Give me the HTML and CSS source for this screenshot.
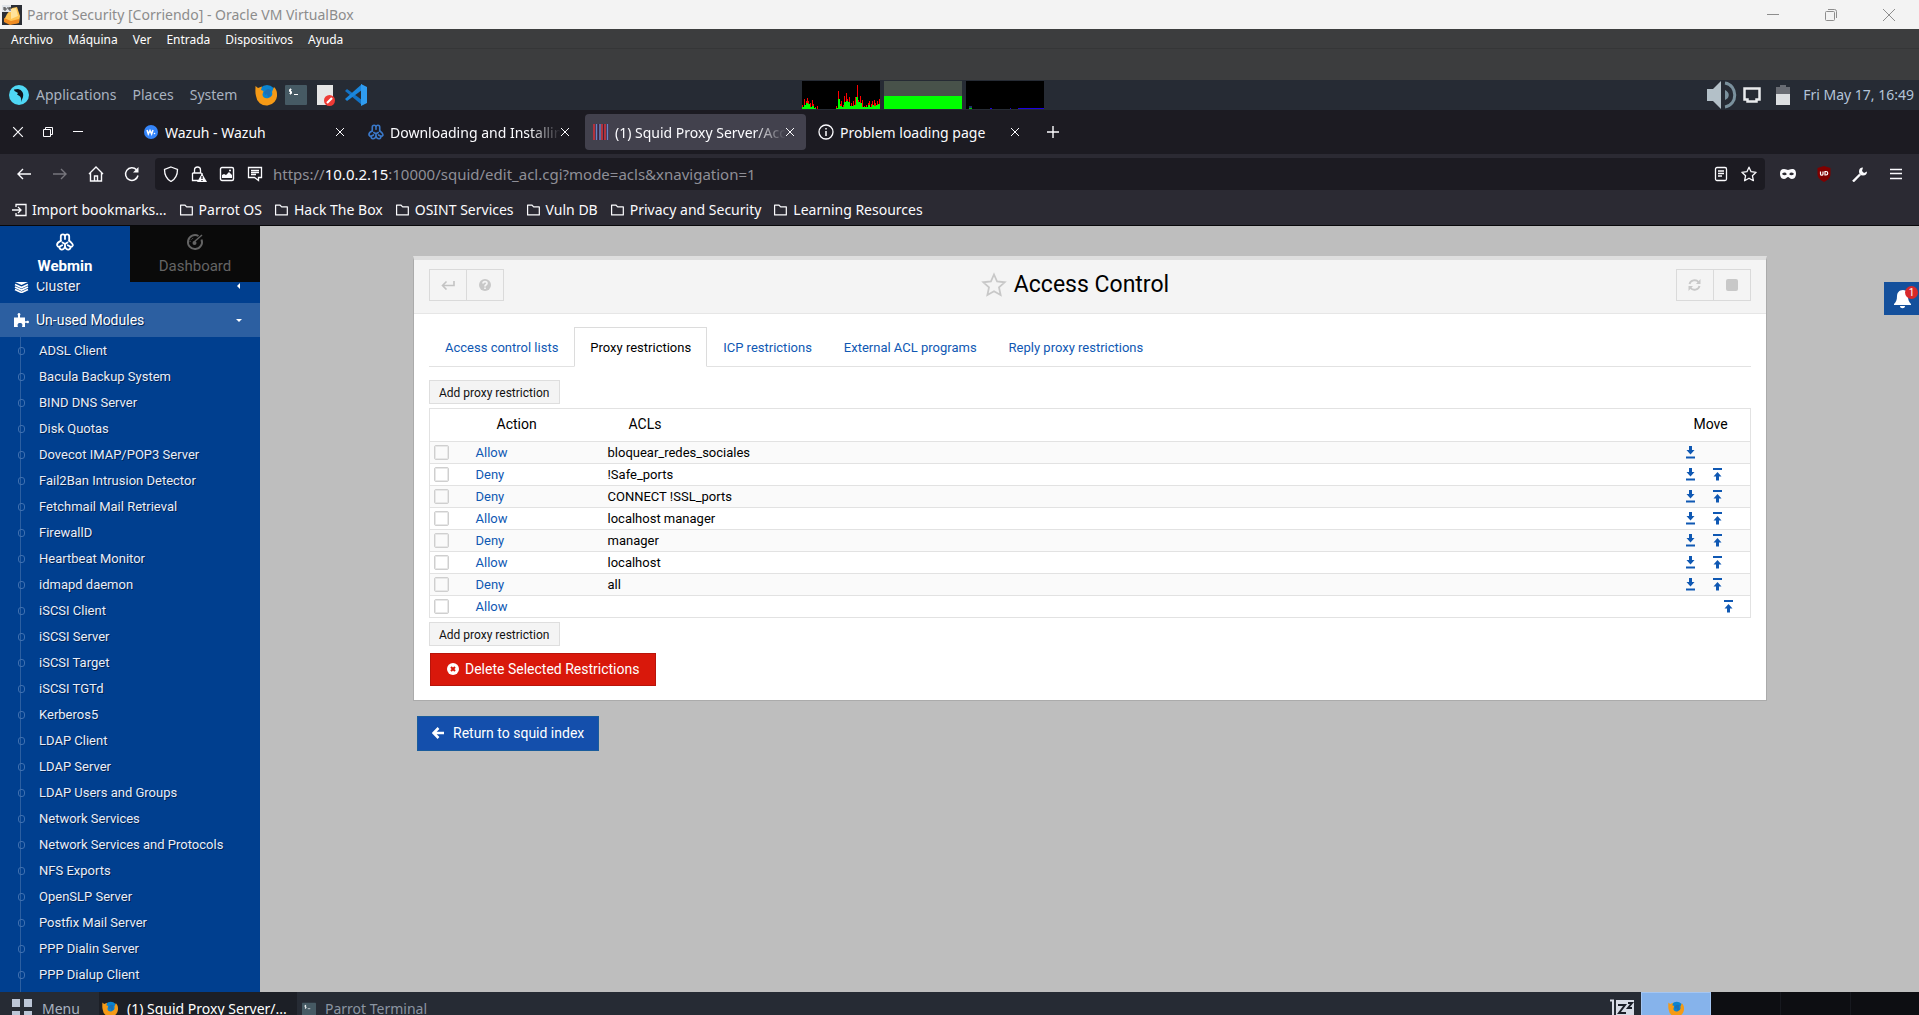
FILE: index.html
```html
<!DOCTYPE html>
<html lang="es">
<head>
<meta charset="utf-8">
<title>Parrot Security [Corriendo] - Oracle VM VirtualBox</title>
<link rel="stylesheet" href="styles.css">
</head>
<body>
<svg class="defs" aria-hidden="true">
  <symbol id="firefox" viewBox="0 0 22 22">
    <circle cx="12" cy="10" r="9" fill="#0a84d0"/>
    <path d="M0.500 2l2.500 2 4-1.500-1 3.500 2.500 1-1 3.500c0 3 3 4.500 6 3.500 3-1 4.500-3 3.500-6l2-5c2 2 3 4 3 7a10.500 10.500 0 0 1-21 2C0 9 .5 5 .5 2z" fill="#f59a16"/>
    <path d="M13 5l3 1-1 3 1 3-3 1-1-3-2 1-1-3 2-2z" fill="#1b6fb5"/>
  </symbol>
  <symbol id="terminal" viewBox="0 0 22 20">
    <rect width="22" height="20" rx="1" fill="#465a64"/>
    <path d="M6.500 4.500h-2v2h2v2h-2M5.500 3.500v6M9 9.500h4" fill="none" stroke="#fff"/>
  </symbol>
  <symbol id="webmin" viewBox="0 0 18 18">
    <g fill="none" stroke="currentColor" stroke-width="1.800" stroke-linejoin="round" stroke-linecap="round">
      <path d="M4.800 7.800V3.600A2.100 2.200 0 0 1 9 3.600V6M9 3.600A2.100 2.200 0 0 1 13.200 3.600V7.800"/>
      <path d="M4.800 7.800C1.800 9 .8 11 1.200 12.500Q1.800 14 3.400 13.800Q3.400 16.300 5.400 16.600Q8 16.800 9 13.800Q10 16.800 12.600 16.600Q14.600 16.300 14.600 13.800Q16.200 14 16.800 12.500Q17.200 11 13.200 7.800"/>
      <path d="M3.400 13.800L6.200 12.300M14.600 13.800L11.800 12.300M9 13.500V11M9 11L6.500 9.500M9 11L11.500 9.500"/>
    </g>
  </symbol>
  <symbol id="x" viewBox="0 0 10 10"><path d="M1 1l8 8M9 1L1 9" fill="none" stroke="currentColor"/></symbol>
  <symbol id="folder" viewBox="0 0 16 14"><path d="M1.700 1.700h4.500l2 2h6v8.600H1.700z" fill="none" stroke="currentColor" stroke-width="1.300" stroke-linejoin="round"/></symbol>
  <symbol id="down" viewBox="0 0 9 14"><path d="M3 1h3v4h2.500L4.500 9.500.5 5H3zM0 11.500h9v2H0z" fill="currentColor"/></symbol>
  <symbol id="up" viewBox="0 0 9 14"><path d="M3 13.500h3v-4h2.500L4.500 5 .5 9.500H3zM0 1h9v2H0z" fill="currentColor"/></symbol>
</svg>

<header class="titlebar">
  <svg width="20" height="20" viewBox="0 0 20 20"><rect width="20" height="20" fill="#2b2e35"/><path d="M5 9l5-6 5-1 3 9-1 7-9 1-6-4z" fill="#ffc553"/><path d="M2 13l7 3 8-2v4l-9 2-6-3z" fill="#f08c22"/><path d="M9 4l5-1 2 8-7 3z" fill="#ffe39a"/><rect width="9" height="7" fill="#dfe3e8"/><path d="M2 2v3h2V3H2M6 2v2h2V2v4" stroke="#444" fill="none"/></svg>
  <span class="titlebar-text">Parrot Security [Corriendo] - Oracle VM VirtualBox</span>
  <button aria-label="Minimizar"><svg width="12" height="12"><path d="M0 5.500h12" stroke="#8d8d8d"/></svg></button>
  <button aria-label="Restaurar"><svg width="12" height="12" fill="none" stroke="#8d8d8d"><rect x=".5" y="2.500" width="9" height="9" rx="1"/><path d="M3 .5h6.500a2 2 0 0 1 2 2V9"/></svg></button>
  <button aria-label="Cerrar"><svg width="12" height="12"><path d="M0 0l12 12M12 0L0 12" stroke="#8d8d8d"/></svg></button>
</header>
<nav class="menubar"><span>Archivo</span><span>Máquina</span><span>Ver</span><span>Entrada</span><span>Dispositivos</span><span>Ayuda</span></nav>

<div class="panel-top">
  <svg class="parrot" width="20" height="20" viewBox="0 0 20 20"><circle cx="10" cy="10" r="10" fill="#4fd8f5"/><path d="M5 4.500l4-.5c4 1 6 4 5 8l-2 5c.5-3 0-5-1.500-6L8 9.500 9 8 5.500 6z" fill="#10151c"/></svg>
  <span>Applications</span><span>Places</span><span>System</span>
  <div class="launchers">
    <svg width="22" height="22"><use href="#firefox"/></svg>
    <svg width="22" height="20"><use href="#terminal"/></svg>
    <svg class="doc" width="18" height="22" viewBox="0 0 18 22"><path d="M0 1h16v20H0z" fill="#e6e6e6"/><circle cx="12.500" cy="16.500" r="5.500" fill="#ee3a35"/><path d="M10 19l5-5" stroke="#fff" stroke-width="2.200"/></svg>
    <svg width="22" height="22" viewBox="0 0 22 22"><path d="M0 7l2-2 15 11v5z" fill="#1272c4"/><path d="M0 15l2 2L17 6V0z" fill="#1a86dc"/><path d="M16 0l6 3v16l-6 3z" fill="#2f9cf0"/></svg>
  </div>
  <div class="graphs">
    <svg width="78" height="28" viewBox="0 0 78 28"><rect width="78" height="28" fill="#000"/>
      <path stroke="red" d="M.5 28v-4M2.500 28v-10M4.500 28v-8M5.500 28v-11M6.500 28v-8M8.500 28v-6M10.500 28v-9M11.500 28v-5M13.500 28v-2M15.500 28v-3M34.500 28v-3M36.500 28v-18M38.500 28v-5M39.500 28v-8M41.500 28v-4M42.500 28v-13M44.500 28v-16M45.500 28v-10M47.500 28v-12M49.500 28v-6M51.500 28v-8M53.500 28v-12M55.500 28v-24M56.500 28v-9M58.500 28v-13M60.500 28v-9M62.500 28v-3M64.500 28v-4M66.500 28v-6M67.500 28v-8M69.500 28v-5M70.500 28v-8M72.500 28v-9M73.500 28v-6M75.500 28v-8M77.500 28v-10"/>
      <path stroke="lime" stroke-width="2" d="M1 28v-2M3 28v-4M5 28v-6M7 28v-5M9 28v-2M11 28v-3M13 28v-1M35 28v-1M37 28v-10M39 28v-3M41 28v-2M43 28v-7M45 28v-8M47 28v-7M49 28v-3M51 28v-3M53 28v-4M55 28v-12M57 28v-7M59 28v-6M61 28v-2M63 28v-2M65 28v-2M67 28v-4M69 28v-2M71 28v-4M73 28v-3M75 28v-4M77 28v-5"/></svg>
    <svg width="78" height="28"><rect width="78" height="28" fill="#48524a"/><rect y="15" width="78" height="13" fill="lime"/></svg>
    <svg width="78" height="28"><rect width="78" height="28" fill="#000"/><path d="M24 27.500h2M44 27.500h1M52 27.500h26" stroke="#1c00e0"/><path d="M3 26h3" stroke="#36c" stroke-width="1"/><path d="M3 27.500h3" stroke="#0c0"/></svg>
  </div>
  <div class="tray">
    <svg width="30" height="28" viewBox="0 0 30 28"><path d="M0 8h6l8-8v28l-8-8H0z" fill="#b3c0c8"/><path d="M18 9c5 2 5 8 0 10z" fill="#7a919d"/><path d="M18 2c13 2 13 22 0 24" fill="none" stroke="#7a919d" stroke-width="3"/></svg>
    <svg width="18" height="16" viewBox="0 0 18 16"><path d="M1.500 1.500h15v11h-3v2h-9v-2h-3z" fill="none" stroke="#e9ebed" stroke-width="2.500"/></svg>
    <svg class="battery" width="14" height="20"><path d="M0 2h4V0h6v2h4v8H0z" fill="#696c73"/><path d="M0 9h14v11H0z" fill="#dcdfe1"/></svg>
    <span>Fri May 17, 16:49</span>
  </div>
</div>

<div class="tabstrip">
  <div class="window-buttons">
    <button aria-label="Close"><svg width="12" height="12"><use href="#x"/></svg></button>
    <button aria-label="Restore"><svg width="10" height="10" fill="none" stroke="#fbfbfe"><path d="M.5 2.500h7v7h-7zM2.500 2V.5h7v7H8"/></svg></button>
    <button aria-label="Minimize"><svg width="10" height="10"><path d="M0 4.500h10" stroke="#fbfbfe"/></svg></button>
  </div>
  <div class="tab"><svg width="16" height="16" viewBox="0 0 16 16"><circle cx="8" cy="8" r="7" fill="#3585f9"/><path d="M4 6l1.300 4L7 6.500 8.600 10 10 6" fill="none" stroke="#fff" stroke-width="1.500"/><circle cx="11.500" cy="9.500" r=".8" fill="#fff"/></svg><span class="tab-label">Wazuh - Wazuh</span><button aria-label="Close tab"><svg width="10" height="10"><use href="#x"/></svg></button></div>
  <div class="tab"><svg class="blue" width="16" height="16"><use href="#webmin"/></svg><span class="tab-label fade">Downloading and Installing</span><button aria-label="Close tab"><svg width="10" height="10"><use href="#x"/></svg></button></div>
  <div class="tab active"><svg width="16" height="16" viewBox="0 0 16 16"><rect width="16" height="16" fill="#3a2540"/><path d="M1 0v16M9 0v16M12 0v16" stroke="#d8383c" stroke-width="1.500"/><path d="M3.500 0v16M7 0v16M14.500 0v16" stroke="#6a85c0" stroke-width="1.500"/></svg><span class="tab-label fade">(1) Squid Proxy Server/Acc</span><button aria-label="Close tab"><svg width="10" height="10"><use href="#x"/></svg></button></div>
  <div class="tab"><svg width="16" height="16" fill="none" stroke="#fbfbfe"><circle cx="8" cy="8" r="7" stroke-width="1.300"/><path d="M8 7v5M8 4v1.500" stroke-width="1.500"/></svg><span class="tab-label">Problem loading page</span><button aria-label="Close tab"><svg width="10" height="10"><use href="#x"/></svg></button></div>
  <button class="newtab" aria-label="New tab"><svg width="12" height="12"><path d="M6 0v12M0 6h12" stroke="#fbfbfe" stroke-width="1.400"/></svg></button>
</div>

<div class="toolbar">
  <button aria-label="Back"><svg width="16" height="16" fill="none" stroke="#fbfbfe" stroke-width="1.400"><path d="M15 8H2M7 3L2 8l5 5"/></svg></button>
  <button aria-label="Forward"><svg width="16" height="16" fill="none" stroke="#77767d" stroke-width="1.400"><path d="M1 8h13M9 3l5 5-5 5"/></svg></button>
  <button aria-label="Home"><svg width="16" height="16" fill="none" stroke="#fbfbfe" stroke-width="1.400"><path d="M1 8l7-7 7 7M2.500 7v8h11V7M6.500 15v-5h3v5"/></svg></button>
  <button aria-label="Reload"><svg width="16" height="16" fill="none" stroke="#fbfbfe" stroke-width="1.500"><path d="M14 9.500A6.300 6.300 0 1 1 12.500 3.800"/><path d="M14.500 1v5.500H9z" fill="#fbfbfe" stroke="none"/></svg></button>
  <div class="urlbar">
    <svg width="16" height="16" fill="none" stroke="#fbfbfe" stroke-width="1.300"><path d="M8 1l6.500 2.500c0 6-2 9.500-6.500 12-4.500-2.500-6.500-6-6.500-12z"/></svg>
    <svg width="16" height="16" fill="none" stroke="#fbfbfe" stroke-width="1.300"><path d="M3.500 7V4a3 3 0 0 1 6 0v3M1.500 7h9M1.500 7v7.500H7M11 7v2"/><path d="M11 7.500l5 8.500H6z" fill="#fbfbfe" stroke="none"/><path d="M11 10v3M11 14v1" stroke="#1c1b22"/></svg>
    <svg width="16" height="16"><rect x="1.500" y="1.500" width="13" height="13" rx="1.500" fill="none" stroke="#fbfbfe" stroke-width="1.400"/><path d="M3 12V9l2-1 2 1 3-3 3 3v3z" fill="#fbfbfe"/><circle cx="11" cy="4.500" r="1" fill="#fbfbfe"/></svg>
    <svg width="16" height="16" fill="none" stroke="#fbfbfe" stroke-width="1.300"><path d="M1.500 1.500h13v10h-3v3l-4-3h-6zM4 4.500h8M4 6.500h8M4 8.500h5"/></svg>
    <p class="url">https://<b>10.0.2.15</b>:10000/squid/edit_acl.cgi?mode=acls&amp;xnavigation=1</p>
    <svg width="16" height="16" fill="none" stroke="#fbfbfe" stroke-width="1.300"><rect x="2.500" y="1.500" width="11" height="13" rx="1.500"/><path d="M5 5h6M5 7.500h6M5 10h4"/></svg>
    <svg width="16" height="16" fill="none" stroke="#fbfbfe" stroke-width="1.300" stroke-linejoin="round"><path d="M8 1.200l2.100 4.500 5 .6-3.700 3.400 1 5L8 12.200l-4.400 2.500 1-5L.9 6.300l5-.6z"/></svg>
  </div>
  <button aria-label="Private mask"><svg width="16" height="10" viewBox="0 0 16 10"><path d="M4 0c2 0 3 1 4 1s2-1 4-1c3 0 4 2 4 4.500S15 10 12 10c-2 0-3-2-4-2s-2 2-4 2c-3 0-4-3-4-5.500S1 0 4 0zm.5 3.500C3 3.500 2.200 4.300 2.200 5.200c1.300 1.300 3.700 1.300 4.600 0C6.400 4 5.500 3.500 4.500 3.500zm7 0c-1 0-1.900.5-2.300 1.700.9 1.300 3.300 1.300 4.600 0 0-.9-.8-1.700-2.300-1.700z" fill="#fbfbfe" fill-rule="evenodd"/></svg></button>
  <button aria-label="uBlock"><svg width="16" height="16"><path d="M8 0l6.500 2v6c0 4-3 6-6.500 8-3.500-2-6.500-4-6.500-8V2z" fill="#800000"/><path d="M4.500 5.500V8a1.200 1.200 0 0 0 2.500 0V5.500M9 5.500h1a1.500 1.500 0 0 1 0 3.500H9z" fill="none" stroke="#fff" stroke-width="1.200"/></svg></button>
  <button aria-label="Tools"><svg width="16" height="16"><path d="M1 15.500L8 8.500" stroke="#fbfbfe" stroke-width="2.400"/><path d="M11 1.500a4 4 0 1 0 4 4l-3 1.500-2-2z" fill="#fbfbfe"/></svg></button>
  <button aria-label="Menu"><svg width="12" height="12"><path d="M0 1.500h12M0 5.500h12M0 10.500h12" stroke="#fbfbfe" stroke-width="1.300"/></svg></button>
</div>
<nav class="bookmarks">
  <a href="#"><svg width="15" height="14" fill="none" stroke="currentColor" stroke-width="1.300"><path d="M0 7h9M6 4l3 3-3 3M4 4V1.500h10v11H4V10"/></svg>Import bookmarks...</a>
  <a href="#"><svg width="15" height="14"><use href="#folder"/></svg>Parrot OS</a>
  <a href="#"><svg width="15" height="14"><use href="#folder"/></svg>Hack The Box</a>
  <a href="#"><svg width="15" height="14"><use href="#folder"/></svg>OSINT Services</a>
  <a href="#"><svg width="15" height="14"><use href="#folder"/></svg>Vuln DB</a>
  <a href="#"><svg width="15" height="14"><use href="#folder"/></svg>Privacy and Security</a>
  <a href="#"><svg width="15" height="14"><use href="#folder"/></svg>Learning Resources</a>
</nav>

<div class="page">
  <aside class="sidebar">
    <div class="modes">
      <button class="mode"><svg width="18" height="18"><use href="#webmin"/></svg>Webmin</button>
      <button class="mode dash"><svg width="18" height="18" viewBox="0 0 18 18"><path d="M12.500 3A7 7 0 1 0 15.500 6.500" fill="none" stroke="currentColor" stroke-width="2"/><path d="M16 2L8 9" stroke="currentColor" stroke-width="1.500"/><circle cx="8.500" cy="10" r="2" fill="currentColor"/><path d="M4 9a5 5 0 0 1 4-4" fill="none" stroke="currentColor" stroke-dasharray="1 1"/></svg>Dashboard</button>
    </div>
    <div class="tree">
      <a class="group cut" href="#"><svg width="15" height="14" viewBox="0 0 15 14"><path d="M1 3l6.500-3L14 3 7.500 6z" fill="#fff"/><path d="M1 5.500l6.500 3 6.500-3M1 8l6.500 3L14 8M1 10.500l6.500 3 6.500-3" fill="none" stroke="#fff" stroke-width="1.700"/></svg>Cluster<i class="caret left"></i></a>
      <a class="group open" href="#"><svg width="15" height="14" viewBox="0 0 15 14"><path d="M0 4.500h4V2.500C3 1.500 3.800 0 5 0s2 1.500 1 2.500v2h5v3.700h1.500c1-1 2.500-.3 2.500.8s-1.500 1.800-2.500.8H11V14H8c.8-2 .5-4-2-4s-2.800 2-2 4H0z" fill="#fff"/></svg>Un-used Modules<i class="caret"></i></a>
      <ul class="modules">
        <li><a href="#">ADSL Client</a></li><li><a href="#">Bacula Backup System</a></li><li><a href="#">BIND DNS Server</a></li><li><a href="#">Disk Quotas</a></li><li><a href="#">Dovecot IMAP/POP3 Server</a></li><li><a href="#">Fail2Ban Intrusion Detector</a></li><li><a href="#">Fetchmail Mail Retrieval</a></li><li><a href="#">FirewallD</a></li><li><a href="#">Heartbeat Monitor</a></li><li><a href="#">idmapd daemon</a></li><li><a href="#">iSCSI Client</a></li><li><a href="#">iSCSI Server</a></li><li><a href="#">iSCSI Target</a></li><li><a href="#">iSCSI TGTd</a></li><li><a href="#">Kerberos5</a></li><li><a href="#">LDAP Client</a></li><li><a href="#">LDAP Server</a></li><li><a href="#">LDAP Users and Groups</a></li><li><a href="#">Network Services</a></li><li><a href="#">Network Services and Protocols</a></li><li><a href="#">NFS Exports</a></li><li><a href="#">OpenSLP Server</a></li><li><a href="#">Postfix Mail Server</a></li><li><a href="#">PPP Dialin Server</a></li><li><a href="#">PPP Dialup Client</a></li>
      </ul>
    </div>
  </aside>

  <main class="content">
    <section class="card">
      <div class="card-head">
        <div class="btn-group">
          <button aria-label="Back"><svg width="14" height="10" fill="none" stroke="#c3c3c3" stroke-width="1.600"><path d="M13 1v4.500H1.500M5.500 1.500l-4 4 4 4"/></svg></button>
          <button aria-label="Help"><svg width="12" height="12"><circle cx="6" cy="6" r="6" fill="#c8c8c8"/><path d="M4 4.500c0-2.500 4-2.500 4-.2C8 6 6 5.500 6 7.500M6 8.500v1.600" fill="none" stroke="#f4f4f4" stroke-width="1.700"/></svg></button>
        </div>
        <h1><svg width="26" height="26" viewBox="0 0 26 26"><path d="M13 2.500l3.100 7 7.600.8-5.700 5.100 1.600 7.600L13 19.200 6.400 23 8 15.400 2.300 10.300l7.600-.8z" fill="none" stroke="#c8c8c8" stroke-width="1.800"/></svg>Access Control</h1>
        <div class="btn-group">
          <button aria-label="Refresh"><svg width="13" height="12" viewBox="0 0 13 12"><path d="M1.500 5C2.500 1 8 0 10.500 3M11.500 7C10.500 11 5 12 2.500 9" fill="none" stroke="#c8c8c8" stroke-width="1.900"/><path d="M12.500 0v5H8zM.5 12V7H5z" fill="#c8c8c8"/></svg></button>
          <button aria-label="Stop"><svg width="12" height="12"><rect width="12" height="12" rx="2" fill="#c8c8c8"/></svg></button>
        </div>
      </div>
      <div class="card-body">
        <nav class="acl-tabs"><a href="#">Access control lists</a><a class="current" href="#">Proxy restrictions</a><a href="#">ICP restrictions</a><a href="#">External ACL programs</a><a href="#">Reply proxy restrictions</a></nav>
        <button class="add">Add proxy restriction</button>
        <table class="acl">
          <thead><tr><th class="c-check"></th><th class="c-action">Action</th><th>ACLs</th><th class="c-move">Move</th></tr></thead>
          <tbody>
            <tr><td><input type="checkbox" aria-label="bloquear_redes_sociales"></td><td><a href="#">Allow</a></td><td>bloquear_redes_sociales</td><td><div class="moves"><a href="#" aria-label="Move down"><svg><use href="#down"/></svg></a></div></td></tr>
            <tr><td><input type="checkbox" aria-label="!Safe_ports"></td><td><a href="#">Deny</a></td><td>!Safe_ports</td><td><div class="moves"><a href="#" aria-label="Move down"><svg><use href="#down"/></svg></a><a href="#" aria-label="Move up"><svg><use href="#up"/></svg></a></div></td></tr>
            <tr><td><input type="checkbox" aria-label="CONNECT !SSL_ports"></td><td><a href="#">Deny</a></td><td>CONNECT !SSL_ports</td><td><div class="moves"><a href="#" aria-label="Move down"><svg><use href="#down"/></svg></a><a href="#" aria-label="Move up"><svg><use href="#up"/></svg></a></div></td></tr>
            <tr><td><input type="checkbox" aria-label="localhost manager"></td><td><a href="#">Allow</a></td><td>localhost manager</td><td><div class="moves"><a href="#" aria-label="Move down"><svg><use href="#down"/></svg></a><a href="#" aria-label="Move up"><svg><use href="#up"/></svg></a></div></td></tr>
            <tr><td><input type="checkbox" aria-label="manager"></td><td><a href="#">Deny</a></td><td>manager</td><td><div class="moves"><a href="#" aria-label="Move down"><svg><use href="#down"/></svg></a><a href="#" aria-label="Move up"><svg><use href="#up"/></svg></a></div></td></tr>
            <tr><td><input type="checkbox" aria-label="localhost"></td><td><a href="#">Allow</a></td><td>localhost</td><td><div class="moves"><a href="#" aria-label="Move down"><svg><use href="#down"/></svg></a><a href="#" aria-label="Move up"><svg><use href="#up"/></svg></a></div></td></tr>
            <tr><td><input type="checkbox" aria-label="all"></td><td><a href="#">Deny</a></td><td>all</td><td><div class="moves"><a href="#" aria-label="Move down"><svg><use href="#down"/></svg></a><a href="#" aria-label="Move up"><svg><use href="#up"/></svg></a></div></td></tr>
            <tr><td><input type="checkbox" aria-label="Allow"></td><td><a href="#">Allow</a></td><td></td><td><div class="moves only-up"><a href="#" aria-label="Move up"><svg><use href="#up"/></svg></a></div></td></tr>
          </tbody>
        </table>
        <button class="add">Add proxy restriction</button>
        <button class="delete"><svg width="12" height="12"><circle cx="6" cy="6" r="6" fill="#fff"/><path d="M4 4l4 4M8 4L4 8" stroke="#d9180b" stroke-width="2"/></svg>Delete Selected Restrictions</button>
      </div>
    </section>
    <button class="return"><svg width="12" height="12" fill="none" stroke="#fff" stroke-width="2.600"><path d="M12 6H2M6.500 1l-5 5 5 5"/></svg>Return to squid index</button>
    <button class="bell" aria-label="Notifications"><svg width="20" height="20" viewBox="0 0 20 20"><path d="M10 1c4 0 5 3 5 6 0 4 1 6 3 8v1H1v-1c2-2 3-4 3-8 0-3 2-6 6-6zM7 17h5c0 3-5 3-5 0z" fill="#fff"/></svg><span class="badge">1</span></button>
  </main>
</div>

<footer class="taskbar">
  <div class="task menu"><svg width="20" height="20"><path d="M0 0h8v8H0zM12 0h8v8h-8zM0 12h8v8H0zM12 12h8v8h-8z" fill="#bcc6d6"/></svg>Menu</div>
  <div class="task front"><svg width="16" height="16"><use href="#firefox"/></svg>(1) Squid Proxy Server/...</div>
  <div class="task dim"><svg width="14" height="14"><use href="#terminal"/></svg>Parrot Terminal</div>
  <svg class="sleep" width="24" height="20" viewBox="0 0 24 20"><path d="M6 1h18v19H6z" fill="#d8dce6"/><path d="M0 1.500h3V20" fill="none" stroke="#d8dce6" stroke-width="2"/><path d="M8 6h7l-6 8h7M18 4h4l-4 5h4" fill="none" stroke="#1c2029" stroke-width="2"/></svg>
  <div class="spaces"><div class="on"><svg width="16" height="16"><use href="#firefox"/></svg></div><div></div><div></div><div></div></div>
</footer>
</body>
</html>
```
FILE: styles.css
```css
* { box-sizing: border-box; }

body {
  margin: 0;
  height: 100vh;
  display: grid;
  grid-template-rows: 29px 51px 30px 44px 40px 32px minmax(0, 1fr) 23px;
  grid-template-columns: minmax(0, 1fr);
  overflow: hidden;
  font: 14px/20px "Noto Sans", sans-serif;
  background: #bebebe;
}

.defs { position: absolute; width: 0; height: 0; }
svg { flex: none; display: block; }
a { color: inherit; text-decoration: none; }
button { display: flex; align-items: center; justify-content: center; padding: 0; border: 0; background: none; font: inherit; color: inherit; }

/* Host window */
.titlebar { display: flex; align-items: center; padding: 0 4px 0 2px; gap: 5px; background: #f3f3f3; color: #8c8c8c; }
.titlebar-text { flex: 1; }
.titlebar button { width: 53px; height: 29px; }
.menubar { display: flex; gap: 15px; padding: 1px 0 0 11px; background: #3c3d3e; color: #fff; font-size: 12px; box-shadow: inset 0 -31px #3c3d3e, inset 0 -32px #353637; }

/* Guest desktop */
.panel-top { position: relative; display: flex; align-items: center; gap: 16px; padding: 0 5px 0 9px; background: #262b34; color: #a9b3c0; }
.parrot { margin-right: -9px; }
.launchers { display: flex; align-items: center; gap: 8px; padding-left: 2px; }
.doc { margin: 0 2px; }
.graphs { position: absolute; left: 802px; display: flex; gap: 4px; }
.tray { display: flex; align-items: center; gap: 6px; margin-left: auto; color: #b4c4d8; }
.battery { margin: 0 7px 0 9px; }

/* Browser chrome */
.tabstrip { display: flex; align-items: center; gap: 4px; background: #1c1b22; color: #fbfbfe; }
.window-buttons { display: flex; width: 131px; padding-left: 3px; }
.window-buttons button { width: 30px; height: 30px; }
.tab { display: flex; align-items: center; gap: 6px; width: 221px; height: 36px; padding: 0 6px 0 8px; border-radius: 4px; }
.tab.active { background: #42414d; }
.tab-label { flex: 1; overflow: hidden; white-space: nowrap; margin-right: -12px; padding-top: 2px; }
.fade { mask-image: linear-gradient(to left, transparent, #000 32px); }
.tab button { width: 20px; height: 20px; }
.blue { color: #3a78c8; }
.newtab { width: 36px; height: 36px; }
.toolbar { display: flex; align-items: center; padding: 0 5px 0 6px; background: #2b2a33; }
.toolbar button { width: 36px; height: 32px; }
.urlbar { flex: 1; display: flex; align-items: center; gap: 12px; height: 32px; margin: 0 5px; padding: 0 8px; border-radius: 4px; background: #1c1b22; }
.url { flex: 1; margin: 0 0 0 -2px; color: #8f8f97; font-size: 15px; }
.url b { font-weight: 400; color: #fbfbfe; }
.bookmarks { display: flex; align-items: center; gap: 12px; padding: 0 12px; border-bottom: 1px solid #08080a; background: #2b2a33; color: #fbfbfe; }
.bookmarks a { display: flex; align-items: center; gap: 5px; }

/* Webmin */
.page { display: flex; min-height: 0; font-family: Roboto, sans-serif; }
.sidebar { display: flex; flex-direction: column; width: 260px; background: #003f8f; color: #e8eefa; text-shadow: 1px 1px #00204f; }
.modes { display: flex; height: 56px; flex: none; }
.mode { flex: 1; flex-direction: column; gap: 6px; font-size: 15px; font-weight: 700; line-height: 18px; color: #fff; text-shadow: none; }
.mode.dash { background: #0a0a0a; color: #646464; font-weight: 400; }
.tree { flex: 1; min-height: 0; overflow: hidden; display: flex; flex-direction: column; }
.group { display: flex; align-items: center; gap: 7px; flex: none; height: 34px; padding: 0 18px 0 14px; }
.cut { margin-top: -13px; }
.open { background: #2c5fa1; color: #fff; }
.caret { margin-left: auto; border: 3px solid transparent; border-top-color: #fff; border-bottom-width: 0; }
.caret.left { border: 3px solid transparent; border-right-color: #fff; border-left-width: 0; margin-right: 2px; }
.modules { flex: 1 0 auto; margin: 0 0 0 20px; padding: 0; border-left: 1px solid #2c5fa1; list-style: none; font-size: 13px; }
.modules li { position: relative; height: 26px; padding-left: 18px; line-height: 27px; }
.modules li::before { content: ""; position: absolute; left: -3px; top: 10px; width: 5px; height: 6px; border: 1px solid #3f70b0; border-radius: 3px; }

.content { position: relative; flex: 1; padding: 30px 152px 0 153px; background: #bebebe; }
.card { border: 1px solid #ababab; border-top: 4px solid #dedede; background: #fff; }
.card-head { display: flex; align-items: center; justify-content: space-between; height: 54px; padding: 1px 15px 4px; border-bottom: 1px solid #e6e6e6; background: #f4f4f4; }
.btn-group { display: flex; }
.btn-group button { width: 38px; height: 32px; border: 1px solid #dadada; }
.btn-group button + button { margin-left: -1px; }
h1 { display: flex; align-items: center; gap: 7px; margin: 0; padding-right: 30px; font-size: 23px; font-weight: 400; line-height: 30px; }
.card-body { padding: 13px 15px 14px; }
.acl-tabs { display: flex; margin-bottom: 13px; border-bottom: 1px solid #e2e2e2; font-size: 13px; color: #0f58b3; }
.acl-tabs a { height: 40px; padding: 10px 15px 0; border: 1px solid transparent; margin-bottom: -1px; }
.acl-tabs .current { border-color: #dcdcdc; border-bottom-color: #fff; background: #fff; color: #000; }
.add { height: 24px; padding: 1px 10px 0 9px; border: 1px solid #dedede; background: #f4f4f4; color: #111; font-size: 12px; }
.acl { width: 100%; margin: 4px 0; border-collapse: collapse; table-layout: fixed; border: 1px solid #e2e2e2; font-size: 13px; }
.acl th { height: 33px; padding: 0 0 2px 27px; font-size: 14px; font-weight: 400; text-align: left; }
.acl td { height: 22px; padding: 0 0 0 6px; line-height: 20px; }
.acl tr { border-bottom: 1px solid #e2e2e2; }
.acl tbody tr:nth-child(odd) { background: #fafafa; }
.acl td a { color: #0f58b3; }
.acl .c-check { width: 40px; }
.acl .c-action { width: 132px; }
.acl .c-move { width: 71px; padding-left: 14px; }
.acl td:first-child { padding-left: 4px; }
.acl input { appearance: none; display: block; width: 15px; height: 15px; margin: 0; border: 1px solid #cfcfcf; border-radius: 2px; box-shadow: inset 0 0 0 1px #e8e8e8; }
.moves { display: flex; gap: 18px; padding-bottom: 2px; }
.moves svg { width: 9px; height: 14px; }
.only-up { margin-left: 38px; }
.delete { gap: 6px; height: 33px; margin: 7px 0 0 1px; padding: 0 16px 2px; border: 1px solid #b8140a; background: #d9180b; color: #fff; }
.return { gap: 9px; height: 35px; margin: 15px 0 0 4px; padding: 0 14px 2px; border: 1px solid #1a5c9c; background: #144fac; color: #fff; }
.bell { position: absolute; right: 0; top: 56px; width: 35px; height: 33px; padding-left: 2px; background: #14509c; }
.badge { position: absolute; right: 1px; top: 4px; width: 13px; height: 13px; border-radius: 50%; background: #d8282a; color: #fff; font-size: 10px; line-height: 13px; text-align: center; }

/* Guest taskbar, cut by the window edge */
.taskbar { display: flex; overflow: hidden; background: #262b34; color: #a9b3c0; }
.task { display: flex; align-items: center; gap: 10px; height: 33px; }
.menu { width: 99px; padding-left: 12px; }
.front { width: 198px; padding-left: 3px; gap: 9px; background: #1c1f26; color: #fff; }
.dim { padding-left: 5px; gap: 9px; color: #8b95a2; }
.sleep { margin: 7px 7px 0 auto; }
.spaces { display: flex; height: 33px; }
.spaces div { width: 70px; border-right: 1px solid #17191f; background: #0d0e12; }
.spaces .on { display: flex; align-items: center; justify-content: center; border: 1px solid #a5c6f2; background: #86b3eb; }
.spaces div:last-child { width: 68px; border: 0; }
```
